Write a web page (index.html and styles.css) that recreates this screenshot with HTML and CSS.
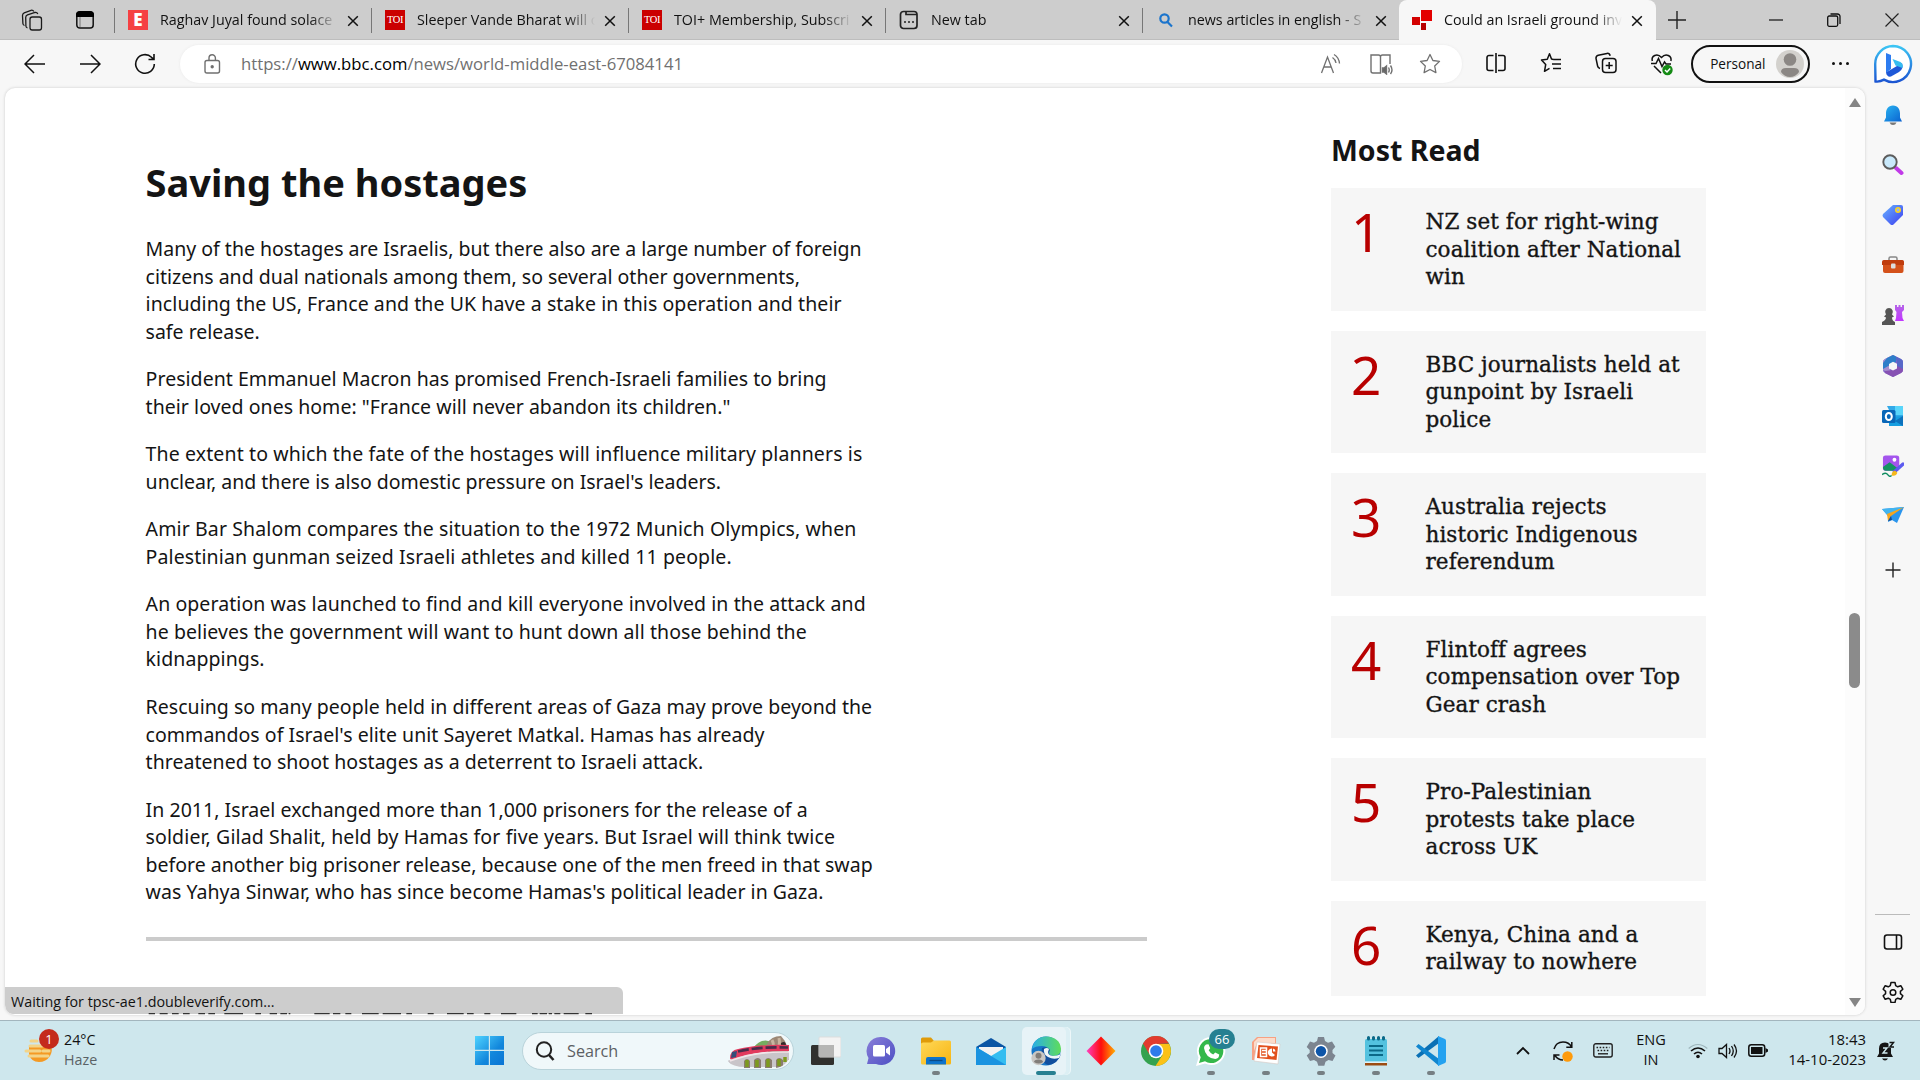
FILE: index.html
```html
<!DOCTYPE html>
<html lang="en">
<head>
<meta charset="utf-8">
<title>Could an Israeli ground invasion of Gaza meet its aims?</title>
<link rel="stylesheet" href="styles.css">
</head>
<body>
<svg class="defs" aria-hidden="true">
  <symbol id="x" viewBox="0 0 12 12"><path d="M1.2 1.2l9.6 9.6M10.8 1.2l-9.6 9.6" stroke="#111" stroke-width="1.5" fill="none"/></symbol>
  <linearGradient id="gBlue" x1="0" y1="0" x2="1" y2="1"><stop offset="0" stop-color="#29b5f2"/><stop offset="1" stop-color="#0a62d0"/></linearGradient>
  <linearGradient id="gWin" x1="0" y1="0" x2="1" y2="1"><stop offset="0" stop-color="#4fd3ff"/><stop offset=".6" stop-color="#1287dc"/><stop offset="1" stop-color="#0a74d4"/></linearGradient>
  <linearGradient id="gBing" x1="0" y1="0" x2="0" y2="1"><stop offset="0" stop-color="#3cc5f4"/><stop offset="1" stop-color="#1b55d2"/></linearGradient>
  <linearGradient id="gPurple" x1="0" y1="0" x2="1" y2="1"><stop offset="0" stop-color="#8a7fd8"/><stop offset="1" stop-color="#4d4fc4"/></linearGradient>
  <linearGradient id="gFolder" x1="0" y1="0" x2="1" y2="1"><stop offset="0" stop-color="#ffd858"/><stop offset="1" stop-color="#f7b512"/></linearGradient>
  <linearGradient id="gDiamond"><stop offset="0" stop-color="#ff3fc0"/><stop offset=".5" stop-color="#ff0d0d"/><stop offset="1" stop-color="#ffb000"/></linearGradient>
  <linearGradient id="gEdge"><stop offset="0" stop-color="#27aee8"/><stop offset="1" stop-color="#5fdd5a"/></linearGradient>
  <linearGradient id="gMagenta" x1="0" y1="0" x2="0" y2="1"><stop offset="0" stop-color="#b565e8"/><stop offset="1" stop-color="#c236ff"/></linearGradient>
  <linearGradient id="gTag" x1="0" y1="0" x2="1" y2="1"><stop offset="0" stop-color="#68b4ff"/><stop offset="1" stop-color="#3d3df0"/></linearGradient>
</svg>

<div class="tabs">
  <div class="tab-tools">
    <svg width="22" height="22" viewBox="0 0 22 22" fill="none" stroke="#1b1b1b" stroke-width="1.3"><rect x="9" y="8" width="11.500" height="13" rx="2.200"/><path d="M6.500 19Q5 18.500 4.900 17L4.700 8.500Q4.700 6.500 6.500 5.800L14 3.500q2-.4 2.800 1.500M3.500 16.500Q2 16 1.900 14.500L1.500 6.500Q1.600 4.500 3.200 3.800L10 1.300q2-.4 2.800 1.200"/></svg>
    <svg width="20" height="20" viewBox="0 0 20 20"><rect x="1.800" y="2" width="16.400" height="16" rx="3" fill="none" stroke="#111" stroke-width="1.500"/><path d="M1 5a4 4 0 0 1 4-4h10a4 4 0 0 1 4 4v2H1z" fill="#000"/><path d="M5 7v10" stroke="#777"/></svg>
  </div>
  <div class="tab"><span class="fav e">E</span><span class="t">Raghav Juyal found solace</span><svg class="x"><use href="#x"/></svg></div>
  <div class="tab"><span class="fav toi">TOI</span><span class="t">Sleeper Vande Bharat will c</span><svg class="x"><use href="#x"/></svg></div>
  <div class="tab"><span class="fav toi">TOI</span><span class="t">TOI+ Membership, Subscri</span><svg class="x"><use href="#x"/></svg></div>
  <div class="tab"><svg class="fav" viewBox="0 0 20 20" fill="none" stroke="#222" stroke-width="1.700"><rect x="1.500" y="1.500" width="16.500" height="17" rx="3"/><path d="M7 1.500v3h11M5 12h2m2 0h2m2 0h2"/></svg><span class="t">New tab</span><svg class="x"><use href="#x"/></svg></div>
  <div class="tab"><svg class="fav" viewBox="0 0 20 20" fill="none" stroke="#1b74cc" stroke-width="2.200"><circle cx="8.500" cy="8.500" r="4.200"/><path d="M11.500 12l4.500 4.500"/></svg><span class="t">news articles in english - S</span><svg class="x"><use href="#x"/></svg></div>
  <div class="tab active"><svg class="fav" viewBox="0 0 20 20"><path fill="#e30000" d="M9 0h11v11H9z"/><path fill="#d30000" d="M0 7h8v8H0z"/><path fill="#b80000" d="M9 13h5v7H9z"/></svg><span class="t">Could an Israeli ground inv</span><svg class="x"><use href="#x"/></svg></div>
  <div class="win">
    <svg width="18" height="18" viewBox="0 0 18 18" stroke="#222" stroke-width="1.400"><path d="M9 0v18M0 9h18"/></svg>
    <svg class="min" width="14" height="14" viewBox="0 0 14 14" stroke="#111" stroke-width="1.200"><path d="M0 7h14"/></svg>
    <svg width="14" height="14" viewBox="0 0 14 14" fill="none" stroke="#111" stroke-width="1.300"><rect x=".7" y="3" width="10" height="10.300" rx="1.500"/><path d="M3.500 1h7A2.500 2.500 0 0 1 13 3.500V11"/></svg>
    <svg width="14" height="14" viewBox="0 0 14 14" stroke="#222" stroke-width="1.200"><path d="M.5.5l13 13m0-13l-13 13"/></svg>
  </div>
</div>

<div class="browser">
  <div class="left">
    <div class="toolbar">
      <span class="nav"><svg width="22" height="20" viewBox="0 0 22 20" fill="none" stroke="#111" stroke-width="1.500"><path d="M21 10H1.500M10 1L1 10l9 9"/></svg></span>
      <span class="nav"><svg width="22" height="20" viewBox="0 0 22 20" fill="none" stroke="#111" stroke-width="1.500"><path d="M1 10h19.500M12 1l9 9-9 9"/></svg></span>
      <span class="nav"><svg width="22" height="22" viewBox="0 0 22 22" fill="none" stroke="#111" stroke-width="1.600"><path d="M20.300 11A9.300 9.300 0 1 1 17.500 4.300L19.500 6M20 1v5.500h-5.500"/></svg></span>
      <div class="omni">
        <svg width="20" height="22" viewBox="0 0 20 22" fill="none" stroke="#707070" stroke-width="1.400"><rect x="3" y="7.500" width="14.500" height="12.500" rx="2"/><path d="M7 7.500V5a3.200 3.200 0 0 1 6.400 0v2.500"/><circle cx="10.200" cy="13.700" r="1" fill="#666"/></svg>
        <span class="url">https://<b>www.bbc.com</b>/news/world-middle-east-67084141</span>
        <span class="act"><svg width="22" height="22" viewBox="0 0 22 22" fill="none" stroke="#707070" stroke-width="1.300"><path d="M1.500 20L7.500 4l6 16M3.700 14h7.600M12.500 4.500q3 2 3.500 5.500M14 1.500q5 3 5.500 9"/></svg></span>
        <span class="act"><svg width="24" height="22" viewBox="0 0 24 22" fill="none" stroke="#707070" stroke-width="1.400"><path d="M11.500 20H4a2 2 0 0 1-2-2V2h7.500a2 2 0 0 1 2 2zM11.500 4a2 2 0 0 1 2-2H21v9"/><path d="M13.500 15h1.500l2.500-2v8L15 19h-1.500z" fill="#666"/><path d="M19.500 14.500q1.500 2.500 0 5M21.500 12.500q3 4.500 0 8.500"/></svg></span>
        <span class="act"><svg width="22" height="22" viewBox="0 0 22 22" fill="none" stroke="#707070" stroke-width="1.300" stroke-linejoin="round"><path d="M11 1.500l2.900 6 6.600.9-4.800 4.600 1.200 6.600L11 16.500l-5.900 3.100L6.300 13 1.500 8.400l6.600-.9z"/></svg></span>
      </div>
      <div class="tools">
        <span><svg width="22" height="22" viewBox="0 0 22 22" fill="none" stroke="#111" stroke-width="1.600"><path d="M8.500 3.500H4a2 2 0 0 0-2 2v11a2 2 0 0 0 2 2h4.500M13 3.500h5a2 2 0 0 1 2 2v11a2 2 0 0 1-2 2h-5M11 1v20"/></svg></span>
        <span><svg width="22" height="22" viewBox="0 0 22 22" fill="none" stroke="#111" stroke-width="1.500" stroke-linejoin="round"><path d="M13.500 7.500L11.500 7 9.500 1.700 7.300 7.300 1.500 8l4.200 4.500-1.200 6.800 5-3M13.500 7.500H21M12 12h9M13 16.500h8"/></svg></span>
        <span><svg width="22" height="22" viewBox="0 0 22 22" fill="none" stroke="#111" stroke-width="1.500"><rect x="7.500" y="6.500" width="13.500" height="14" rx="3"/><path d="M14.200 10v7M10.700 13.500h7M5 16.500Q3 16 2.600 14L1 6.500Q.8 4 3.300 3.300L12 1.400q2.500-.3 3.200 2.400"/></svg></span>
        <span><svg width="24" height="24" viewBox="0 0 24 24" fill="none" stroke="#111" stroke-width="1.500"><path d="M2.300 9C1 4 7 .5 11.500 5.500 16 .5 22 4 20.900 9M1 11.500h5l2.500-5 3.500 8 2.500-4.500 1.500 2h5M4 14l7 7"/><circle cx="17.500" cy="18" r="5.200" fill="#148a14" stroke="none"/><path d="M15 18l2 2 3.200-3.500" stroke="#fff"/></svg></span>
      </div>
      <div class="pill">Personal<svg width="28" height="28" viewBox="0 0 28 28"><circle cx="14" cy="14" r="14" fill="#d3d1cd"/><circle cx="14" cy="9.500" r="6.300" fill="#8b8784"/><path d="M5 22q0-4 5-4h8q5 0 5 4-3.500 5-9 5T5 22z" fill="#8b8784"/></svg></div>
      <span class="dots"><i></i><i></i><i></i></span>
    </div>

    <div class="page">
      <main class="article">
        <h2>Saving the hostages</h2>
        <p>Many of the hostages are Israelis, but there also are a large number of foreign<br>citizens and dual nationals among them, so several other governments,<br><span class="s1">including the US, France and the UK have a stake in this operation and their</span><br>safe release.</p>
        <p class="s0">President Emmanuel Macron has promised French-Israeli families to bring<br>their loved ones home: "France will never abandon its children."</p>
        <p><span class="s2">The extent to which the fate of the hostages will influence military planners is</span><br>unclear, and there is also domestic pressure on Israel's leaders.</p>
        <p class="s2">Amir Bar Shalom compares the situation to the 1972 Munich Olympics, when<br>Palestinian gunman seized Israeli athletes and killed 11 people.</p>
        <p class="s1">An operation was launched to find and kill everyone involved in the attack and<br>he believes the government will want to hunt down all those behind the<br>kidnappings.</p>
        <p class="s0">Rescuing so many people held in different areas of Gaza may prove beyond the<br>commandos of Israel's elite unit Sayeret Matkal. Hamas has already<br>threatened to shoot hostages as a deterrent to Israeli attack.</p>
        <p><span class="s0">In 2011, Israel exchanged more than 1,000 prisoners for the release of a</span><br><span class="s2">soldier, Gilad Shalit, held by Hamas for five years. But Israel will think twice</span><br>before another big prisoner release, because one of the men freed in that swap<br><span class="s0">was Yahya Sinwar, who has since become Hamas's political leader in Gaza.</span></p>
        <hr>
      </main>
      <aside class="most">
        <h3>Most Read</h3>
        <ol>
          <li><span class="n">1</span><span>NZ set for right-wing<br>coalition after National<br>win</span></li>
          <li><span class="n">2</span><span>BBC journalists held at<br>gunpoint by Israeli<br>police</span></li>
          <li><span class="n">3</span><span>Australia rejects<br>historic Indigenous<br>referendum</span></li>
          <li><span class="n">4</span><span>Flintoff agrees<br>compensation over Top<br>Gear crash</span></li>
          <li><span class="n">5</span><span>Pro-Palestinian<br>protests take place<br>across UK</span></li>
          <li><span class="n">6</span><span>Kenya, China and a<br>railway to nowhere</span></li>
        </ol>
      </aside>
      <div class="scroll"><i class="up"></i><i class="thumb"></i><i class="down"></i></div>
      <div class="status">Waiting for tpsc-ae1.doubleverify.com...</div>
      <svg class="cut" width="460" height="2" viewBox="50 0 1380 6" preserveAspectRatio="none" stroke="#333" stroke-width="4"><path d="M55 2h19m14 0h24m13 0h20m13 0h20m26 0h20m10 0h20m28 0h56m37 0h17m26 0h22m10 0h20m5 0h5m72 0h46m10 0h22m15 0h18m32 0h50m12 0h55m16 0h17m47 0h18m40 0h50m10 0h20m32 0h18m32 0h46m47 0h17m6 0h22m5 0h10m7 0h18m10 0h45m20 0h20"/></svg>
    </div>
  </div>

  <nav class="side">
    <svg class="bing" width="40" height="40" viewBox="0 0 40 40"><path d="M20 2A18 18 0 1 1 11 35.600Q7 38 2.500 37.500L2.200 20A18 18 0 0 1 20 2z" fill="#fff" stroke="url(#gBing)" stroke-width="2.400"/><path d="M13 9l5 2v14l-5 4z" fill="#2d7cf0"/><path d="M13 28.500L29 19q2 6-3 9l-8 4.500q-4 1-5-4z" fill="#1e58d8"/><path d="M19.500 15l8 3q3 2 2 6l-7-2.500z" fill="#35bdf0"/></svg>
    <svg viewBox="0 0 22 22"><path d="M11 1.500c5 0 7 4 7 8v4l2 4H2l2-4v-4c0-4 2-8 7-8z" fill="url(#gBlue)"/><path d="M7.500 18.500h7q-1 2.500-3.500 2.500t-3.500-2.500z" fill="#777"/></svg>
    <svg viewBox="0 0 22 22"><path d="M14 14l5.500 5" stroke="#c13ae8" stroke-width="4" stroke-linecap="round"/><circle cx="8" cy="8" r="6.700" fill="#c9e9fb" stroke="#5c5c5c" stroke-width="1.900"/></svg>
    <svg viewBox="0 0 22 22"><path d="M11 1h8q2 0 2 2v8L11.500 20.500q-1.500 1-3 0L1 13q-1-1.500 0-3z" fill="url(#gTag)"/><circle cx="16" cy="6" r="2.200" fill="#8eb2ff" stroke="#ffd31a" stroke-width="1.600"/></svg>
    <svg viewBox="0 0 22 22"><path d="M7 7V4.500q0-1.500 1.500-1.500h5Q15 3 15 4.500V7" fill="none" stroke="#888" stroke-width="1.500"/><rect x="1" y="6" width="20.500" height="13" rx="2" fill="#d4511a"/><path d="M0 7.500Q0 6 2 6h18q2 0 2 1.500V11H0z" fill="#c03c0d"/><rect x="9" y="9.500" width="4.500" height="5" rx="1" fill="#ddd"/></svg>
    <svg viewBox="0 0 22 22"><path d="M13 1h2v2h1.500V1h2v2H20V1h2v5l-2 2 .5 6 1.500 3h-9l1-3 .5-6-1.500-2z" fill="url(#gMagenta)"/><path d="M7 4a4 4 0 0 1 3 6.500l2 2-2 1q0 3 3 4.500v3H0v-3q4-2 4-4.500l-2-1 2-2A4 4 0 0 1 7 4z" fill="#555"/></svg>
    <svg viewBox="0 0 22 22"><path d="M11 0l8 4q2 1 2 3v8q0 2-2 3l-8 4-8-4q-2-1-2-3V7q0-2 2-3z" fill="#7f62c9"/><path d="M13 1l6 3q2 1 2 3v8l-6-4V7z" fill="#5868c8"/><path d="M1 15V7q0-2 2-3l8-4 3 1.500V7l-6 3v8z" fill="#a68fd0"/><path d="M5 3l6-3 3 1.500V7l-6 3-7 4V8z" fill="#2e7fc9"/><path d="M21 14v1q0 2-2 3l-8 4-8-4v-2l8-1 4-4z" fill="#8752b3"/><path d="M11 6.800l4 2v4.700L11 15.500l-4-2V9z" fill="#f7f7f7"/></svg>
    <svg viewBox="0 0 22 22"><path d="M5 1h14q2 0 2 2v17H7V5z" fill="#32a9e8"/><path d="M13 1h8v9h-8z" fill="#58d5fa"/><path d="M7 12l14-1v10H7z" fill="#169ee0"/><path d="M21 11v10l-8-5z" fill="#0d72bd"/><rect x="0" y="5" width="13.500" height="13" rx="1.500" fill="#0967b8"/><ellipse cx="6.800" cy="11.500" rx="3" ry="3.500" fill="none" stroke="#fff" stroke-width="2"/></svg>
    <svg viewBox="0 0 23 22"><rect x="1" y="0" width="17" height="16" rx="2.500" fill="#a455ed"/><circle cx="13" cy="4.500" r="2" fill="#fff"/><path d="M1 12l7-5 8 6-3 3H4q-3 0-3-4z" fill="#139462"/><path d="M13 17l9-8" stroke="#5c5bf0" stroke-width="3.500" stroke-linecap="round"/><path d="M10 21q0-5 4-5l2 2q-1 4-6 3z" fill="#f5b81a"/><path d="M0 20q4-3 6 0t4 1" stroke="#108c60" stroke-width="1.500" fill="none"/></svg>
    <svg viewBox="0 0 22 22"><path d="M0 4l22-2-7 16-5-3-4 2v-6z" fill="#2a95ed"/><path d="M0 4l22-2L6 11z" fill="#42b4ef"/><path d="M22 2L5 9l1 7 3-5z" fill="#f5a51d"/><path d="M6 16l3-5 1 4z" fill="#124c94"/></svg>
    <svg class="plus" viewBox="0 0 22 22" stroke="#222" stroke-width="1.400"><path d="M11 3.500v15M3.500 11h15"/></svg>
    <div class="bottom">
      <svg viewBox="0 0 22 22" fill="none" stroke="#111" stroke-width="1.600"><rect x="2.500" y="4" width="17" height="14" rx="2.500"/><path d="M14.500 4v14"/></svg>
      <svg viewBox="0 0 22 22" fill="none" stroke="#111" stroke-width="1.500" stroke-linejoin="round"><path d="M9 1.500h4l.7 3.200 2 1.100 3.100-1.100 2 3.500-2.400 2.200v2.200l2.400 2.200-2 3.500-3.100-1.100-2 1.100-.7 3.200H9l-.7-3.200-2-1.100-3.100 1.100-2-3.500 2.400-2.200v-2.200L1.200 8.200l2-3.500 3.100 1.100 2-1.100z"/><circle cx="11" cy="11.500" r="2.800"/></svg>
    </div>
  </nav>
</div>

<footer class="taskbar">
  <div class="weather">
    <span class="wi"><svg width="32" height="36" viewBox="0 0 32 36"><path d="M5 12h22q2 6-1 11-4 6-11 6-8 0-10-8z" fill="#f49a24"/><path d="M7 8h6M6 13h12M2 18h14m3 0h6M5 23h19" stroke="#f3d488" stroke-width="3" stroke-linecap="round"/></svg><b>1</b></span>
    <span class="wt">24°C<br><em>Haze</em></span>
  </div>
  <svg class="start" viewBox="0 0 29 29"><path d="M0 0h13.800v13.800H0zM15 0h14v13.800H15zM0 15h13.800v14H0zM15 15h14v14H15z" fill="url(#gWin)"/></svg>
  <div class="search">
    <svg width="20" height="20" viewBox="0 0 20 20" fill="none" stroke="#222" stroke-width="2"><circle cx="9" cy="8.500" r="7.200"/><path d="M14 14l4.500 5" stroke-width="2.600"/></svg><span>Search</span>
    <svg class="train" width="64" height="34" viewBox="0 0 64 34"><path d="M26 14Q36 2 46 9v7H24z" fill="#74ad60"/><path d="M40 10q4-8 14-8 8 8 8 24l-20-4z" fill="#9c8775"/><path d="M45 6q2 3 1 8m6-10q1 4 0 9" stroke="#c9b5a0" stroke-width="3"/><path d="M54 9q5-3 5 3v5h-5z" fill="#33292a"/><path d="M0 27Q22 18 62 18v7q-2 5-7 8H18Q6 33 0 27z" fill="#c9c5c9"/><path d="M17 34v-7q3-4 6 0v7m4 0v-8q4-4 7 0v8m4 0v-8q3-4 7 0v8m4 0v-8q3-4 7 0v8" fill="#8a7d70"/><path d="M20 33v-7m10 7v-7m11 7v-8m11 7v-7m6 3v-5" stroke="#7d9a1d" stroke-width="3.500"/><path d="M3 24.500q0-8.500 8-9.500 20-5 51-4v6Q30 16 4 25.500z" fill="#e23a5e"/><path d="M11 17.500q20-5 50-4" fill="none" stroke="#4b2c4b" stroke-width="2.600" stroke-dasharray="11 3"/><path d="M4 24l1-6 5-1-1 6z" fill="#344e79"/><path d="M3 27q27-10 59-9" fill="none" stroke="#f1e5e8" stroke-width="1.500"/></svg>
  </div>
  <div class="apps">
    <span><svg viewBox="0 0 30 30"><rect x="0" y="9" width="23" height="20" rx="1.500" fill="#30302e"/><rect x="8" y="1" width="22" height="20" rx="1" fill="#f3f3f3" stroke="#ddd"/><path d="M8 9h15v12H8z" fill="#b5b5b4"/></svg></span>
    <span><svg viewBox="0 0 30 30"><path d="M15 1a14 14 0 1 1-5 27H1l1.500-6A14 14 0 0 1 15 1z" fill="url(#gPurple)"/><rect x="7" y="9" width="12" height="11.500" rx="1.500" fill="#fff"/><path d="M20 13l4-3v9.500l-4-3z" fill="#fff"/></svg></span>
    <span class="run"><svg viewBox="0 0 30 30"><path d="M0 3q0-1.500 1.500-1.500H10L13 5v5H0z" fill="#e09b0a"/><path d="M0 8q0-1.500 2-1.500h8L13 4.500h15.500Q30 4.500 30 6v21q0 1.500-1.500 1.500h-27Q0 28.500 0 27z" fill="url(#gFolder)"/><path d="M5 28.500V23q0-2 2-2h16q2 0 2 2v5.500z" fill="#0e74cc"/><path d="M8.500 24.500h13" stroke="#0b4a87" stroke-width="1.300"/></svg></span>
    <span><svg viewBox="0 0 30 30"><path d="M0 11L15 2l15 9v9H0z" fill="#0b55a4"/><path d="M3 11h24v8L15 24 3 19z" fill="#f2f2f2"/><path d="M0 11l15 9 15-9v18H0z" fill="#35bdf0"/><path d="M0 11l30 18H0z" fill="#1a93e0"/></svg></span>
    <span class="current run"><svg viewBox="0 0 30 30"><circle cx="15" cy="15" r="14.500" fill="#1576c8"/><path d="M1 13Q3 1 15 .5 29 1 30 13q0 7-8 7-6 0-4-5-1-5-7-5-7 0-10 3z" fill="url(#gEdge)"/><path d="M11 12q6-2 8 2-3 5 3 6 4 1 8-2-3 10-13 11-9-3-6-17z" fill="#114f9e"/><path d="M13 13q3-2 5 0-3 6 4 7 4 0 8-2l-2 4q-6 2-11-1-5-3-4-8z" fill="#eef6f8"/><circle cx="7.500" cy="22" r="7.200" fill="#c9c7c4"/><circle cx="7.500" cy="19.700" r="3" fill="#817d79"/><path d="M3 26q0-2.500 4.500-2.500T12 26q-4 3-9 0z" fill="#817d79"/></svg></span>
    <span><svg viewBox="0 0 30 30"><path d="M15 .5L29.500 15 15 29.500.5 15z" fill="url(#gDiamond)"/></svg></span>
    <span><svg viewBox="0 0 30 30"><circle cx="15" cy="15" r="15" fill="#34a24f"/><path d="M2 7.500A15 15 0 0 1 28 7.500L15 8 8.500 18.500z" fill="#e23b2e"/><path d="M15 8h13.200A15 15 0 0 1 14.500 30l7-11z" fill="#fbc117"/><circle cx="15" cy="15" r="7.300" fill="#fff"/><circle cx="15" cy="15" r="5.800" fill="#2e7bea"/></svg></span>
    <span class="run"><svg viewBox="0 0 30 30"><path d="M15 1a14 14 0 1 1-6 26.500L0 30l2.500-8.500A14 14 0 0 1 15 1z" fill="#fff"/><path d="M15 3a12 12 0 1 1-6 22.200L3 27l1.700-5.700A12 12 0 0 1 15 3z" fill="#34b84b"/><path d="M10 8.500l2.500-.3 1.700 4-1.500 2q1.500 3 4.500 4.300l2-2 4 2q0 4-4 4.500Q9.500 22 8 12q0-2.500 2-3.500z" fill="#fff"/></svg><b class="count">66</b></span>
    <span class="run"><svg viewBox="0 0 30 30"><path d="M6 1h19v23H1V6z" fill="#f7a183"/><path d="M7 2h17v5H6l-3 8V6z" fill="#fbdccb"/><path d="M6 6l23 2-2 20-24-3z" fill="#fff" stroke="#d9c9c2" stroke-width=".6"/><path d="M7.500 9L27 10.500 25.500 24 6 22z" fill="#e2501d"/><path d="M9.500 12h6v8.500h-6zM11 14.500h4.500M11 17.500h4.500" fill="none" stroke="#fff" stroke-width="1.500"/><path d="M21 12.500a4 4 0 1 0 3 6.500l-3-2.500z" fill="#fff"/><path d="M22 12.500q2.500.5 2.500 3H22z" fill="#fff"/></svg></span>
    <span class="run"><svg viewBox="0 0 30 30"><path d="M12 1h6l1 4 3 1.700 4-1.200 3.300 5.300L26.500 14v3l3 2.500-3 5.500-4-1-3 1.700-1.200 4h-6l-1.300-4-3-1.700-4 1L.7 19.500l3-2.700V14L.7 11 4 5.500l4 1.200L11 5z" fill="#7c8590"/><circle cx="15" cy="15.200" r="6.700" fill="#fff"/><circle cx="15" cy="15.200" r="5.200" fill="#0e55a8"/></svg></span>
    <span class="run"><svg viewBox="0 0 30 30"><rect x="4" y="3" width="22" height="26" rx="1.500" fill="#54c2df"/><path d="M4 25.500h22v1.300H4z" fill="#fff"/><path d="M4 27h22v2.500H4z" fill="#9c4c12"/><path d="M8 10h14M8 14.500h14M8 19h14" stroke="#0b6988" stroke-width="1.800"/><path d="M7.500 1.500v1.500m5-1.500v1.500m5-1.500v1.500m5-1.500v1.500" stroke="#0b6988" stroke-width="3" stroke-linecap="round"/></svg></span>
    <span class="run"><svg viewBox="0 0 30 30"><path d="M0 19.500l2.500 2.500 20.500-15V0z" fill="#0a70b5"/><path d="M0 10.500L2.500 8 23 23v7z" fill="#1086cf"/><path d="M22 0l7 3q1 .5 1 2v20q0 1.500-1 2l-7 3z" fill="#24a2f0"/></svg></span>
  </div>
  <div class="tray">
    <span class="w40"><svg width="14" height="9" viewBox="0 0 14 9" fill="none" stroke="#111" stroke-width="1.800"><path d="M1 8l6-6 6 6"/></svg></span>
    <span class="w40"><svg width="22" height="22" viewBox="0 0 22 22" fill="none" stroke="#111" stroke-width="1.500"><path d="M2 9Q4 2 11 2q6 0 8.500 5M19.800 2v5.300h-5.500M11 20q-5 0-8.500-5M2 20v-5h5.500"/><circle cx="15.500" cy="16.500" r="5.200" fill="#ff9a0a" stroke="none"/></svg></span>
    <span class="w40"><svg width="20" height="15" viewBox="0 0 20 15" fill="none" stroke="#222" stroke-width="1.400"><rect x=".8" y=".8" width="18.400" height="13.200" rx="2"/><path d="M3.500 4.500h13M4.500 7.500h11" stroke-dasharray="1.600 1.500" stroke-width="1.600"/><path d="M5 10.800h10"/></svg></span>
    <span class="lang">ENG<br>IN</span>
    <span class="w30"><svg width="20" height="16" viewBox="0 0 20 16" fill="none" stroke="#111" stroke-width="1.600"><path d="M.7 5.500q9-8 18.600 0" stroke="#9db5bb" stroke-width="1.200"/><path d="M3 8q7-6 14 0M6 11q4-3.500 8 0"/><circle cx="10" cy="13.500" r="1.800" fill="#111" stroke="none"/></svg></span>
    <span class="w30"><svg width="20" height="16" viewBox="0 0 20 16" fill="none" stroke="#111" stroke-width="1.300"><path d="M1 5.500h3L8.500 1.500v13L4 10.500H1zM11 5q2 3 0 6M13.500 3q3.500 5 0 10M16 1.500q5 6.500 0 13"/></svg></span>
    <span class="w30"><svg width="20" height="13" viewBox="0 0 20 13"><rect x=".8" y=".8" width="15.900" height="11.400" rx="2.500" fill="none" stroke="#111" stroke-width="1.500"/><rect x="3" y="3" width="11.500" height="7" fill="#111"/><path d="M17.500 4l2.500 1.500v2L17.500 9z" fill="#111"/></svg></span>
    <span class="clock">18:43<br>14-10-2023</span>
    <span class="bell"><svg width="18" height="20" viewBox="0 0 18 20"><path d="M8 1.500q6 0 6 6v5l2 3.500H0l2-3.500v-5q0-6 6-6zM5 17.500h6q-1 2-3 2t-3-2z" fill="#151515"/><path d="M11.500 0H18v7h-6.500z" fill="#cee7ed"/><path d="M6 7h4l-4 5h4.500" stroke="#cfe8ed" fill="none" stroke-width="1.400"/><path d="M12.500 1.500h4L13 6h4" stroke="#151515" fill="none" stroke-width="1.500"/></svg></span>
  </div>
</footer>
</body>
</html>
```
FILE: styles.css
```css
* { box-sizing: border-box; }
body {
  margin: 0; width: 1920px; height: 1080px; overflow: hidden;
  display: flex; flex-direction: column;
  font-family: "Open Sans", "Noto Sans", sans-serif; font-size: 14.3px; color: #111;
  background: #f7f7f7;
}
svg { display: block; flex: none; }
.defs { position: absolute; width: 0; height: 0; }
b { font-weight: 400; }

/* tab strip */
.tabs { height: 40px; display: flex; background: #cdcdcd; box-shadow: inset 0 -1px #bdbdbd; }
.tab-tools { width: 114px; display: flex; align-items: center; gap: 32px; padding-left: 21px; }
.tab { width: 257px; display: flex; align-items: center; padding-left: 14px; position: relative; }
.tab::before { content: ""; position: absolute; left: 0; top: 8px; width: 1px; height: 25px; background: #777; }
.fav { width: 20px; height: 20px; margin-right: 12px; flex: none; text-align: center; }
.e { background: #f54043; color: #fff; font: 800 17px/20px "Open Sans", sans-serif; }
.toi { background: #cb0000; color: #fff; font: 10.5px/20px "Liberation Serif", serif; letter-spacing: -.4px; }
.t { width: 180px; line-height: 24px; white-space: nowrap;
  mask-image: linear-gradient(90deg, #000 150px, transparent 178px); }
.x { width: 12px; height: 12px; margin-left: 7px; margin-top: 1px; }
.tab.active { background: #f7f7f7; border-radius: 8px 8px 0 0; padding-left: 13px; }
.tab.active::before { display: none; }
.win { display: flex; align-items: center; padding-left: 12px; width: 264px; }
.win svg + svg { margin-left: 44px; }
.win .min { margin-left: 83px !important; }

.browser { display: flex; height: 980px; }
.left { width: 1866px; display: flex; flex-direction: column; }

/* toolbar */
.toolbar { height: 48px; display: flex; align-items: center; padding-left: 7.500px; padding-bottom: 1px; }
.toolbar > * { flex: none; }
.nav { width: 55px; display: flex; justify-content: center; }
.omni { width: 1282px; height: 38px; margin-left: 7.500px; border-radius: 19px; background: #fff;
  display: flex; align-items: center; padding: 0 7px 0 22px; box-shadow: 0 0 3px #e9e9e9; }
.url { margin-left: 19px; font-size: 16.7px; color: #707070; flex: 1; }
.url b { color: #000; }
.act { width: 49.5px; display: flex; justify-content: center; }
.tools { display: flex; margin-left: 6px; }
.tools span { width: 55.3px; display: flex; justify-content: center; }
.pill { margin-left: 2px; width: 119px; height: 38px; border: 2px solid #111; border-radius: 19px;
  display: flex; align-items: center; justify-content: space-between; padding: 0 4px 0 17px; font-size: 13.600px; }
.dots { width: 56px; padding-left: 4px; display: flex; justify-content: center; gap: 4px; }
.dots i { width: 3px; height: 3px; border-radius: 50%; background: #111; }

/* web page */
.page { position: relative; margin-left: 5px; width: 1860px; height: 927px; overflow: hidden; display: flex;
  background: #fff; border-radius: 10px; box-shadow: 0 0 3px #c8c8c8; color: #141414;
  font-family: "Noto Sans", sans-serif; }
.article { width: 1001px; margin-left: 140.600px; padding-top: 65.500px; }
h2 { margin: 0 0 25.600px; font-size: 38px; line-height: 56px; font-weight: 700; }
.article p { margin: 0 0 20.100px; font-size: 19.500px; line-height: 27.500px; white-space: nowrap; }
.s0 { letter-spacing: .04px; }
.s1 { letter-spacing: .08px; }
.s2 { letter-spacing: .12px; }
hr { border: 0; height: 4px; margin: 31px 0 0; background: #cbcbcb; }
.most { width: 375px; margin-left: 184.400px; padding-top: 42px; }
h3 { margin: 0; font-size: 28.500px; line-height: 40px; height: 58px; }
ol { list-style: none; margin: 0; padding: 0; display: flex; flex-direction: column; gap: 20px; }
li { background: #f6f6f6; display: flex; padding: 20px 0 20.100px 20px; white-space: nowrap;
  font: 400 21.500px/27.500px "DejaVu Serif", serif; letter-spacing: .08px; -webkit-text-stroke: .35px #141414; }
.n { width: 74.500px; height: 40px; color: #b80000; font: 53px/48px "Noto Sans", sans-serif; -webkit-text-stroke: 0; }
.scroll { width: 20px; margin-left: 139px; background: #fcfcfc; display: flex; flex-direction: column; align-items: center; }
.up, .down { border: 6px solid transparent; }
.up { border-bottom: 9px solid #858585; border-top: 0; margin-top: 10px; }
.down { border-top: 9px solid #858585; border-bottom: 0; margin-top: auto; margin-bottom: 8px; }
.thumb { width: 11px; height: 75px; border-radius: 6px; background: #8b8b8b; margin-top: 506px; }
.status { position: absolute; left: 0; bottom: 1px; width: 618px; height: 27px; background: #cdcdcd;
  border-radius: 0 6px 0 8px; padding-left: 6px; font: 14.300px/29px "Open Sans", sans-serif; color: #111; }
.cut { position: absolute; left: 142px; bottom: 0; }

/* sidebar */
.side { width: 54px; display: flex; flex-direction: column; align-items: center; gap: 28.100px; padding-right: 1px; }
.side svg { width: 22px; height: 22px; }
.side .bing { width: 40px; height: 40px; margin: 4px 0 -8px; }
.side .plus { margin-top: 4px; }
.bottom { margin-top: auto; width: 35px; border-top: 1px solid #bbb; height: 106px; padding-top: 16px;
  display: flex; flex-direction: column; align-items: center; gap: 28px; }

/* taskbar */
.taskbar { height: 60px; background: #cee7ed; border-top: 1px solid #a3b6be; display: flex; align-items: center; position: relative; }
.weather { width: 475px; padding-left: 24px; display: flex; align-items: center; gap: 8px; }
.wi { position: relative; }
.wi b { position: absolute; left: 15px; top: -4px; width: 20px; height: 20px; border-radius: 50%; background: #c42b1c; color: #fff; text-align: center; font-size: 13px; line-height: 20px; }
.wt { font-size: 14.300px; line-height: 20px; margin-top: -2px; }
.wt em { font-style: normal; color: #5a6266; }
.start { width: 29px; height: 29px; }
.search { margin-left: 18px; width: 272px; height: 38px; border-radius: 19px; background: #f0f8fa; border: 1px solid #b9d3da;
  display: flex; align-items: center; padding: 0 2px 0 12px; font-size: 16.200px; color: #5c6063; }
.search span { margin-left: 12px; flex: 1; }
.train { border-radius: 0 17px 17px 12px; }
.apps { display: flex; margin-left: 4px; }
.apps span { width: 55px; height: 60px; display: flex; align-items: center; justify-content: center; position: relative; }
.apps svg { width: 30px; height: 30px; position: relative; }
.run::after { content: ""; position: absolute; bottom: 6px; left: 23.500px; width: 8px; height: 4px; border-radius: 2px; background: #767f83; }
.apps .current::before { content: ""; position: absolute; left: 4px; top: 6px; width: 44px; height: 48px; border-radius: 5px;
  background: #e7f3f7; box-shadow: 4px 0 0 #dceff4, 5px 0 0 #edf7f9; }
.current::after { left: 18px; width: 20px; background: #278091; }
.count { position: absolute; left: 26px; top: 8px; width: 26px; height: 20px; border-radius: 10px; background: #268091; color: #fff; text-align: center; font-size: 13px; line-height: 20px; }
.tray { margin-left: 45px; display: flex; align-items: center; line-height: 20px; font-size: 14.900px; }
.tray span { display: flex; justify-content: center; }
.w40 { width: 40px; }
.w30 { width: 30px; }
.tray .lang { display: block; width: 56px; text-align: center; margin-right: 4px; margin-top: -1px; font-size: 14.500px; }
.tray .clock { display: block; width: 93px; text-align: right; margin-top: -3px; }
.tray .bell { margin-left: 11px; }
```
